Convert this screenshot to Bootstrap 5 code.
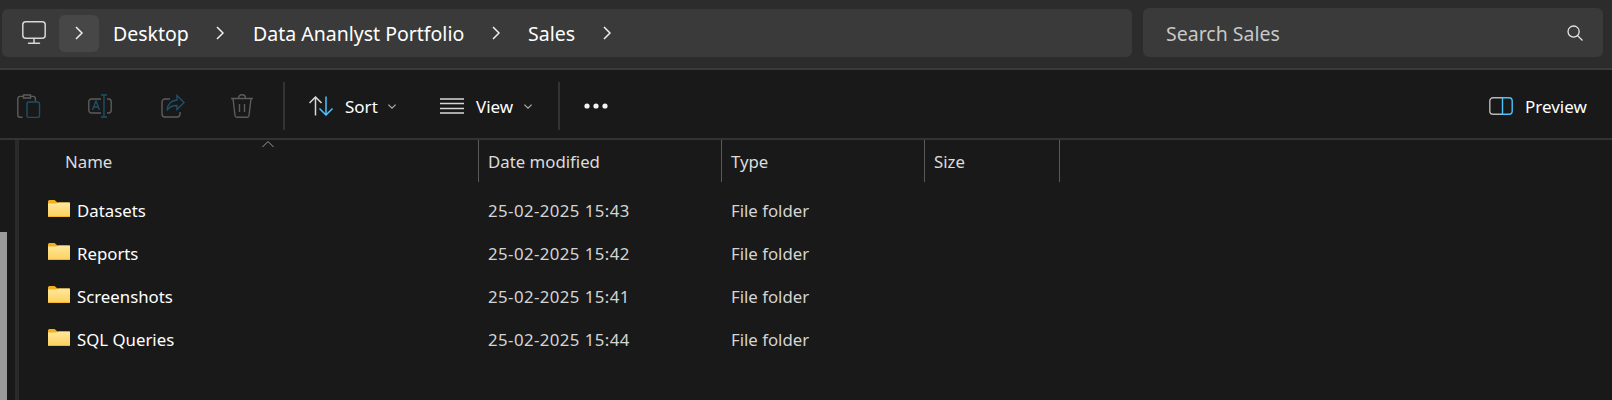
<!DOCTYPE html>
<html lang="en">
<head>
  <meta charset="UTF-8" />
  <title>Sales - File Explorer</title>
  <link href="https://cdn.jsdelivr.net/npm/bootstrap@5.3.0/dist/css/bootstrap.min.css" rel="stylesheet" />
  <style>
    html, body { height: 400px; overflow: hidden; }
    body { background: #191919; color: #fff; font-family: "Noto Sans", "Open Sans", sans-serif; font-size: 16.8px; }
    svg { display: block; flex: none; }
    .top-strip { height: 70px; background: #2c2c2c; border-bottom: 2px solid #3a3a3a; padding: 8px 9px 0 2px; gap: 11px; }
    .addr-bar { width: 1130px; height: 48px; margin-top: 1px; background: #3a3a3a; border-radius: 6px; }
    .pc-slot { width: 57px; padding-left: 20px; }
    .chev-tile { width: 40px; height: 37px; background: #474747; border-radius: 6px; }
    .crumb { font-size: 19.5px; line-height: 1; padding-top: 2px; }
    .crumb-desktop { margin-left: 14px; width: 77px; }
    .chev-a { margin-left: 26px; }
    .crumb-data { margin-left: 29px; width: 212px; white-space: nowrap; }
    .chev-b { margin-left: 27px; }
    .crumb-sales { margin-left: 28px; width: 47px; }
    .chev-c { margin-left: 28px; }
    .search-bar { width: 460px; height: 49px; background: #3a3a3a; border-radius: 6px; padding: 0 20px 0 23px; color: #c8c8c8; }
    .tool-strip { height: 70px; background: #191919; border-bottom: 2px solid #333; padding-top: 4px; }
    .tool-icon { width: 24px; height: 24px; }
    .t1 { margin-left: 17px; }
    .t2 { margin-left: 47px; }
    .t3 { margin-left: 49px; }
    .t4 { margin-left: 45px; }
    .tool-sep { width: 2px; height: 48px; background: #333; }
    .s1 { margin-left: 29px; }
    .sort-ic { margin-left: 24px; }
    .tool-text { font-size: 17px; line-height: 1; }
    .sort-tx { margin-left: 12px; width: 33px; }
    .caret-a { margin-left: 10px; }
    .view-ic { margin-left: 44px; }
    .view-tx { margin-left: 12px; width: 38px; }
    .s2 { margin-left: 26px; }
    .dots { margin-left: 24px; }
    .prev-ic { margin-left: auto; }
    .prev-tx { margin-left: 12px; margin-right: 26px; width: 61px; }
    .content-area { height: 260px; }
    .rail { width: 19px; flex: none; }
    .rail-gap { width: 15px; flex: none; }
    .thumb { width: 7px; height: 168px; background: #9a9a9a; margin-top: 92px; }
    .rail-line { width: 4px; background: #2a2a2a; }
    .head-row { height: 50px; position: relative; color: #dcdcdc; }
    .col-name { width: 459px; padding-left: 46px; flex: none; }
    .col-date { width: 243px; padding-left: 9px; flex: none; border-left: 1px solid #5a5a5a; }
    .col-type { width: 203px; padding-left: 9px; flex: none; border-left: 1px solid #5a5a5a; }
    .col-size { width: 136px; padding-left: 9px; flex: none; border-left: 1px solid #5a5a5a; border-right: 1px solid #5a5a5a; }
    .head-row > div { height: 42px; line-height: 43px; }
    .sort-caret { position: absolute; left: 243px; top: 0; }
    .file-row { height: 43px; line-height: 1; color: #d4d4d4; }
    .row-name { width: 460px; flex: none; padding-left: 29px; color: #fff; gap: 7px; }
    .row-date { width: 242px; padding-left: 9px; flex: none; letter-spacing: .43px; }
    .row-type { padding-left: 10px; }
    .folder-ic { margin-top: -4px; }
  </style>
</head>
<body>
  <div class="top-strip d-flex">
    <div class="addr-bar d-flex align-items-center">
      <div class="pc-slot">
        <svg width="24" height="24" viewBox="0 0 24 24" fill="none" stroke="#d6d6d6" stroke-width="1.5"><rect x=".8" y=".8" width="22.4" height="16.4" rx="3"/><path d="M12 17.5V22M6.5 22.2h11" stroke-linecap="round"/></svg>
      </div>
      <div class="chev-tile d-flex align-items-center justify-content-center">
        <svg width="8" height="14" viewBox="0 0 8 14" fill="none" stroke="#f0f0f0" stroke-width="1.5"><path d="M1 1l6 6-6 6"/></svg>
      </div>
      <div class="crumb crumb-desktop">Desktop</div>
      <svg class="chev-a" width="8" height="14" viewBox="0 0 8 14" fill="none" stroke="#f0f0f0" stroke-width="1.5"><path d="M1 1l6 6-6 6"/></svg>
      <div class="crumb crumb-data">Data Ananlyst Portfolio</div>
      <svg class="chev-b" width="8" height="14" viewBox="0 0 8 14" fill="none" stroke="#f0f0f0" stroke-width="1.5"><path d="M1 1l6 6-6 6"/></svg>
      <div class="crumb crumb-sales">Sales</div>
      <svg class="chev-c" width="8" height="14" viewBox="0 0 8 14" fill="none" stroke="#f0f0f0" stroke-width="1.5"><path d="M1 1l6 6-6 6"/></svg>
    </div>
    <div class="search-bar d-flex align-items-center justify-content-between">
      <div class="crumb">Search Sales</div>
      <svg width="16" height="16" viewBox="0 0 16 16" fill="none" stroke="#e6e6e6" stroke-width="1.3"><circle cx="6.6" cy="6.6" r="5.6"/><path d="M10.6 10.6L15.5 15.5"/></svg>
    </div>
  </div>

  <div class="tool-strip d-flex align-items-center">
    <svg class="tool-icon t1" viewBox="0 0 24 24" fill="none" stroke-width="1.4"><path stroke="#5c5c5c" d="M5.5 23.3H3a2.2 2.2 0 0 1-2.2-2.2V4.6A2.2 2.2 0 0 1 3 2.4h3M14 2.4h2.2a2.2 2.2 0 0 1 2.2 2.2V7M6.5 1h7v3h-7z"/><rect stroke="#1f5069" x="10" y="8" width="12.5" height="15.4" rx="2"/></svg>
    <svg class="tool-icon t2" viewBox="0 0 24 24" fill="none" stroke-width="1.4"><path stroke="#5c5c5c" d="M13 5H3.5A2.7 2.7 0 0 0 .8 7.7v8.6A2.7 2.7 0 0 0 3.5 19H13M19 5h1.5a2.7 2.7 0 0 1 2.7 2.7v8.6a2.7 2.7 0 0 1-2.7 2.7H19"/><path stroke="#1f5069" d="M16 1v22M13 1h6M13 23h6M4.5 16l3.5-9 3.5 9M5.8 13h4.4"/></svg>
    <svg class="tool-icon t3" viewBox="0 0 24 24" fill="none" stroke-width="1.4"><path stroke="#5c5c5c" d="M9 5H4a3 3 0 0 0-3 3v12a3 3 0 0 0 3 3h12a3 3 0 0 0 3-3v-2"/><path stroke="#1f5069" d="M16 1.500l7 7-7 7v-4c-5 0-8 1.500-10 5 .5-6 4-10 10-10.500z"/></svg>
    <svg class="tool-icon t4" viewBox="0 0 24 24" fill="none" stroke="#5c5c5c" stroke-width="1.4"><path d="M1 4.500h22M8.500 4.500C8.500 2 10 .8 12 .8s3.500 1.200 3.500 3.700M3 4.500l2 17a2 2 0 0 0 2 1.800h10a2 2 0 0 0 2-1.800l2-17M9.500 10v8M14.500 10v8"/></svg>
    <div class="tool-sep s1"></div>
    <svg class="sort-ic" width="24" height="20" viewBox="0 0 24 20" fill="none" stroke-width="1.5"><path stroke="#d8d8d8" d="M6.500 19.500V1M.5 7l6-6 6 6"/><path stroke="#4cc2ff" d="M17 .5V19M10.500 12.500l6.500 6.500 6.500-6.500"/></svg>
    <div class="tool-text sort-tx">Sort</div>
    <svg class="caret-a" width="8" height="5" viewBox="0 0 8 5" fill="none" stroke="#b4b4b4" stroke-width="1.1"><path d="M.4.6L4 4.200 7.600.6"/></svg>
    <svg class="view-ic" width="24" height="16" viewBox="0 0 24 16" fill="none" stroke="#d8d8d8" stroke-width="1.300"><path d="M0 1h24M0 5.500h24M0 10.500h24M0 15h24"/></svg>
    <div class="tool-text view-tx">View</div>
    <svg class="caret-a" width="8" height="5" viewBox="0 0 8 5" fill="none" stroke="#b4b4b4" stroke-width="1.1"><path d="M.4.6L4 4.200 7.600.6"/></svg>
    <div class="tool-sep s2"></div>
    <svg class="dots" width="24" height="6" viewBox="0 0 24 6" fill="#f4f4f4"><circle cx="3" cy="3" r="2.600"/><circle cx="12" cy="3" r="2.600"/><circle cx="21" cy="3" r="2.600"/></svg>
    <svg class="prev-ic" width="24" height="18" viewBox="0 0 24 18" fill="none" stroke-width="1.400"><path stroke="#b8b8b8" d="M13 .8H4A3.200 3.200 0 0 0 .8 4v10A3.200 3.200 0 0 0 4 17.200h9"/><path stroke="#4cc2ff" d="M13.500 .8H20A3.200 3.200 0 0 1 23.200 4v10a3.200 3.200 0 0 1-3.200 3.200h-6.500z"/></svg>
    <div class="tool-text prev-tx">Preview</div>
  </div>

  <div class="content-area d-flex">
    <div class="d-flex rail">
      <div class="rail-gap"><div class="thumb"></div></div>
      <div class="rail-line"></div>
    </div>
    <div class="flex-grow-1">
      <div class="head-row d-flex">
        <svg class="sort-caret" width="12" height="8" viewBox="0 0 12 8" fill="none" stroke="#9a9a9a" stroke-width="1"><path d="M.5 7L6 1.500 11.500 7"/></svg>
        <div class="col-name">Name</div>
        <div class="col-date">Date modified</div>
        <div class="col-type">Type</div>
        <div class="col-size">Size</div>
      </div>
      <div>
        <div class="file-row d-flex align-items-center">
          <div class="row-name d-flex align-items-center"><svg class="folder-ic" width="22" height="18" viewBox="0 0 22 18"><defs><linearGradient id="folderFill" x1="0" y1="0" x2="0" y2="1"><stop offset="0" stop-color="#ffe89c"/><stop offset="1" stop-color="#fdd05c"/></linearGradient></defs><path fill="#f2b01f" d="M0 1.500A1.500 1.500 0 0 1 1.500 0h5l3 2.500H22V6H0z"/><path fill="url(#folderFill)" d="M0 3.500h8L10.500 2.500H21a1 1 0 0 1 1 1V16a1 1 0 0 1-1 1H1a1 1 0 0 1-1-1z"/><path fill="#f3b72e" d="M0 16h22a1 1 0 0 1-1 1H1a1 1 0 0 1-1-1z"/></svg><span>Datasets</span></div>
          <div class="row-date">25-02-2025 15:43</div>
          <div class="row-type">File folder</div>
        </div>
        <div class="file-row d-flex align-items-center">
          <div class="row-name d-flex align-items-center"><svg class="folder-ic" width="22" height="18" viewBox="0 0 22 18"><path fill="#f2b01f" d="M0 1.500A1.500 1.500 0 0 1 1.500 0h5l3 2.500H22V6H0z"/><path fill="url(#folderFill)" d="M0 3.500h8L10.500 2.500H21a1 1 0 0 1 1 1V16a1 1 0 0 1-1 1H1a1 1 0 0 1-1-1z"/><path fill="#f3b72e" d="M0 16h22a1 1 0 0 1-1 1H1a1 1 0 0 1-1-1z"/></svg><span>Reports</span></div>
          <div class="row-date">25-02-2025 15:42</div>
          <div class="row-type">File folder</div>
        </div>
        <div class="file-row d-flex align-items-center">
          <div class="row-name d-flex align-items-center"><svg class="folder-ic" width="22" height="18" viewBox="0 0 22 18"><path fill="#f2b01f" d="M0 1.500A1.500 1.500 0 0 1 1.500 0h5l3 2.500H22V6H0z"/><path fill="url(#folderFill)" d="M0 3.500h8L10.500 2.500H21a1 1 0 0 1 1 1V16a1 1 0 0 1-1 1H1a1 1 0 0 1-1-1z"/><path fill="#f3b72e" d="M0 16h22a1 1 0 0 1-1 1H1a1 1 0 0 1-1-1z"/></svg><span>Screenshots</span></div>
          <div class="row-date">25-02-2025 15:41</div>
          <div class="row-type">File folder</div>
        </div>
        <div class="file-row d-flex align-items-center">
          <div class="row-name d-flex align-items-center"><svg class="folder-ic" width="22" height="18" viewBox="0 0 22 18"><path fill="#f2b01f" d="M0 1.500A1.500 1.500 0 0 1 1.500 0h5l3 2.500H22V6H0z"/><path fill="url(#folderFill)" d="M0 3.500h8L10.500 2.500H21a1 1 0 0 1 1 1V16a1 1 0 0 1-1 1H1a1 1 0 0 1-1-1z"/><path fill="#f3b72e" d="M0 16h22a1 1 0 0 1-1 1H1a1 1 0 0 1-1-1z"/></svg><span>SQL Queries</span></div>
          <div class="row-date">25-02-2025 15:44</div>
          <div class="row-type">File folder</div>
        </div>
      </div>
    </div>
  </div>
  <script src="https://cdn.jsdelivr.net/npm/bootstrap@5.3.0/dist/js/bootstrap.bundle.min.js"></script>
</body>
</html>
